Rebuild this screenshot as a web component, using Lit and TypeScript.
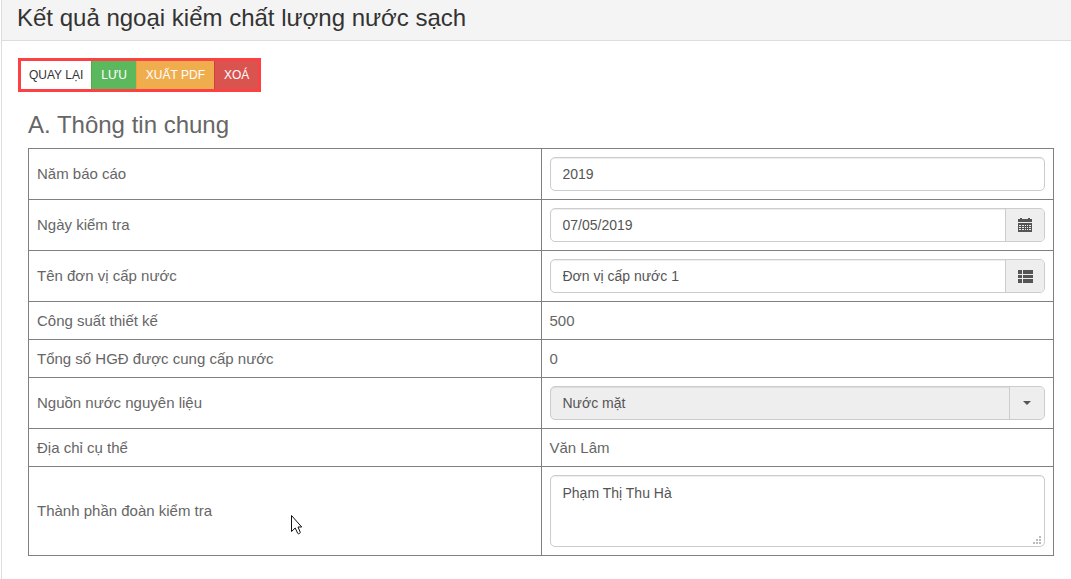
import { LitElement, html, svg, css } from "lit";
import { customElement, state } from "lit/decorators.js";

const calendarIcon = html`<svg class="icon" viewBox="0 0 14 14" width="14" height="14" aria-hidden="true">
  <path fill="#555" fill-rule="evenodd" d="M2 0h2v1h6V0h2v1h2v3H0V1h2zM0 5h14v9H0zM1 7v1h2V7zM4 7v1h2V7zM7 7v1h1V7zM9 7v1h1V7zM11 7v1h2V7zM1 9v1h2V9zM4 9v1h2V9zM7 9v1h1V9zM9 9v1h1V9zM11 9v1h2V9zM1 11v1h2v-1zM4 11v1h2v-1zM7 11v1h1v-1zM9 11v1h1v-1zM11 11v1h2v-1z"/>
</svg>`;

const listIcon = html`<svg class="icon" viewBox="0 0 15 14" width="15" height="14" aria-hidden="true">
  <path fill="#555" d="M0 1h4v4H0zM5 1h10v4H5zM0 6h4v3H0zM5 6h10v3H5zM0 10h4v4H0zM5 10h10v4H5z"/>
</svg>`;

const gripDots = [[6, 0], [3, 3], [6, 3], [0, 6], [3, 6], [6, 6]];

@customElement("app-root")
export class AppRoot extends LitElement {
  @state() private year = "2019";
  @state() private date = "07/05/2019";
  @state() private unit = "Đơn vị cấp nước 1";
  @state() private members = "Phạm Thị Thu Hà";

  static styles = css`
    :host {
      display: block;
      font-family: "Liberation Sans", Arial, sans-serif;
      font-size: 15px;
      line-height: 21px;
      color: #666;
      background: #fff;
    }
    * { box-sizing: border-box; }
    .page {
      position: relative;
      min-height: 100vh;
      margin-left: 1px;
      border-left: 1px solid #ddd;
    }
    .title-bar {
      padding: 1px 15px 5px;
      background: #f4f4f4;
      border-bottom: 1px solid #ddd;
    }
    .title {
      margin: 0;
      font-size: 24px;
      line-height: 34px;
      font-weight: 400;
      color: #333;
    }
    .content { padding: 17px 17px 22px 16px; }
    .actions {
      display: inline-flex;
      vertical-align: top;
      border: 3px solid #fb4144;
    }
    .btn {
      height: 28px;
      padding: 0 9px;
      border: 0 solid;
      border-left-width: 1px;
      font: 12px/28px "Liberation Sans", Arial, sans-serif;
      color: #fff;
      white-space: nowrap;
    }
    .back { background: #fff; color: #333; border-left-width: 0; padding: 0 8px; }
    .save { background: #5cb85c; border-color: #4cae4c; }
    .export { background: #f0ad4e; border-color: #eea236; }
    .delete { background: #d9534f; border-color: #d43f3a; }
    .section { padding: 16px 0 0 10px; }
    .section-title {
      margin: 0 0 6px;
      font-size: 24px;
      line-height: 34px;
      font-weight: 400;
    }
    .info {
      width: 100%;
      border-collapse: collapse;
      table-layout: fixed;
    }
    .info th, .info td {
      width: 50%;
      padding: 8px;
      border: 1px solid #808080;
      text-align: left;
      vertical-align: middle;
      font-weight: 400;
    }
    .label { display: block; line-height: 20px; }
    .field {
      display: flex;
      position: relative;
      border: 1px solid #ccc;
      border-radius: 5px;
      background: #fff;
      overflow: hidden;
      box-shadow: inset 0 1px 1px rgba(0, 0, 0, 0.075);
    }
    .input {
      display: block;
      flex: 1;
      min-width: 0;
      height: 32px;
      margin: 0;
      padding: 0 12px;
      border: 0;
      outline: 0;
      background: transparent;
      font: 14px/20px "Liberation Sans", Arial, sans-serif;
      color: #555;
      appearance: none;
      opacity: 1;
    }
    .area { height: 70px; padding: 7px 12px; resize: none; }
    .addon {
      display: flex;
      flex: none;
      align-items: center;
      justify-content: center;
      width: 39px;
      height: 32px;
      padding: 0;
      border: 0;
      border-left: 1px solid #ccc;
      background: #eee;
    }
    .arrow { width: 35px; pointer-events: none; }
    .disabled { background: #eee; }
    .icon { display: block; }
    .grip { position: absolute; right: 3px; bottom: 2px; pointer-events: none; }
    .cursor { position: absolute; left: 289px; top: 515px; pointer-events: none; }
  `;

  render() {
    return html`
      <main class="page">
        <header class="title-bar">
          <h1 class="title">Kết quả ngoại kiểm chất lượng nước sạch</h1>
        </header>
        <div class="content">
          <div class="actions">
            <button type="button" class="btn back">QUAY LẠI</button>
            <button type="button" class="btn save">LƯU</button>
            <button type="button" class="btn export">XUẤT PDF</button>
            <button type="button" class="btn delete">XOÁ</button>
          </div>
          <section class="section">
            <h2 class="section-title">A. Thông tin chung</h2>
            <table class="info">
              <tbody>
                <tr>
                  <th scope="row"><label class="label" for="year">Năm báo cáo</label></th>
                  <td><div class="field"><input class="input" id="year" type="text" .value=${this.year} /></div></td>
                </tr>
                <tr>
                  <th scope="row"><label class="label" for="date">Ngày kiểm tra</label></th>
                  <td>
                    <div class="field">
                      <input class="input" id="date" type="text" .value=${this.date} />
                      <button type="button" class="addon" aria-label="Chọn ngày">${calendarIcon}</button>
                    </div>
                  </td>
                </tr>
                <tr>
                  <th scope="row"><label class="label" for="unit">Tên đơn vị cấp nước</label></th>
                  <td>
                    <div class="field">
                      <input class="input" id="unit" type="text" .value=${this.unit} />
                      <button type="button" class="addon" aria-label="Chọn đơn vị">${listIcon}</button>
                    </div>
                  </td>
                </tr>
                <tr><th scope="row">Công suất thiết kế</th><td>500</td></tr>
                <tr><th scope="row">Tổng số HGĐ được cung cấp nước</th><td>0</td></tr>
                <tr>
                  <th scope="row"><label class="label" for="source">Nguồn nước nguyên liệu</label></th>
                  <td>
                    <div class="field disabled">
                      <select class="input" id="source" disabled><option>Nước mặt</option></select>
                      <span class="addon arrow">
                        <svg class="icon" viewBox="0 0 8 4" width="8" height="4" aria-hidden="true"><path fill="#555" d="M0 0h8L4 4z"/></svg>
                      </span>
                    </div>
                  </td>
                </tr>
                <tr><th scope="row">Địa chỉ cụ thể</th><td>Văn Lâm</td></tr>
                <tr>
                  <th scope="row"><label class="label" for="members">Thành phần đoàn kiểm tra</label></th>
                  <td>
                    <div class="field">
                      <textarea class="input area" id="members" .value=${this.members}></textarea>
                      <svg class="grip" viewBox="0 0 8 8" width="8" height="8" aria-hidden="true">
                        ${gripDots.map(([x, y]) => svg`<rect x=${x} y=${y} width="2" height="2" fill="#bbb"/>`)}
                      </svg>
                    </div>
                  </td>
                </tr>
              </tbody>
            </table>
          </section>
        </div>
        <svg class="cursor" viewBox="0 0 13 20" width="13" height="20" aria-hidden="true">
          <path fill="#fff" stroke="#111" d="M.5.5v16l3.700-3.500 2.500 5.300q.6.800 1.700.3t.8-1.500L7 12h3.700z"/>
        </svg>
      </main>
    `;
  }
}
